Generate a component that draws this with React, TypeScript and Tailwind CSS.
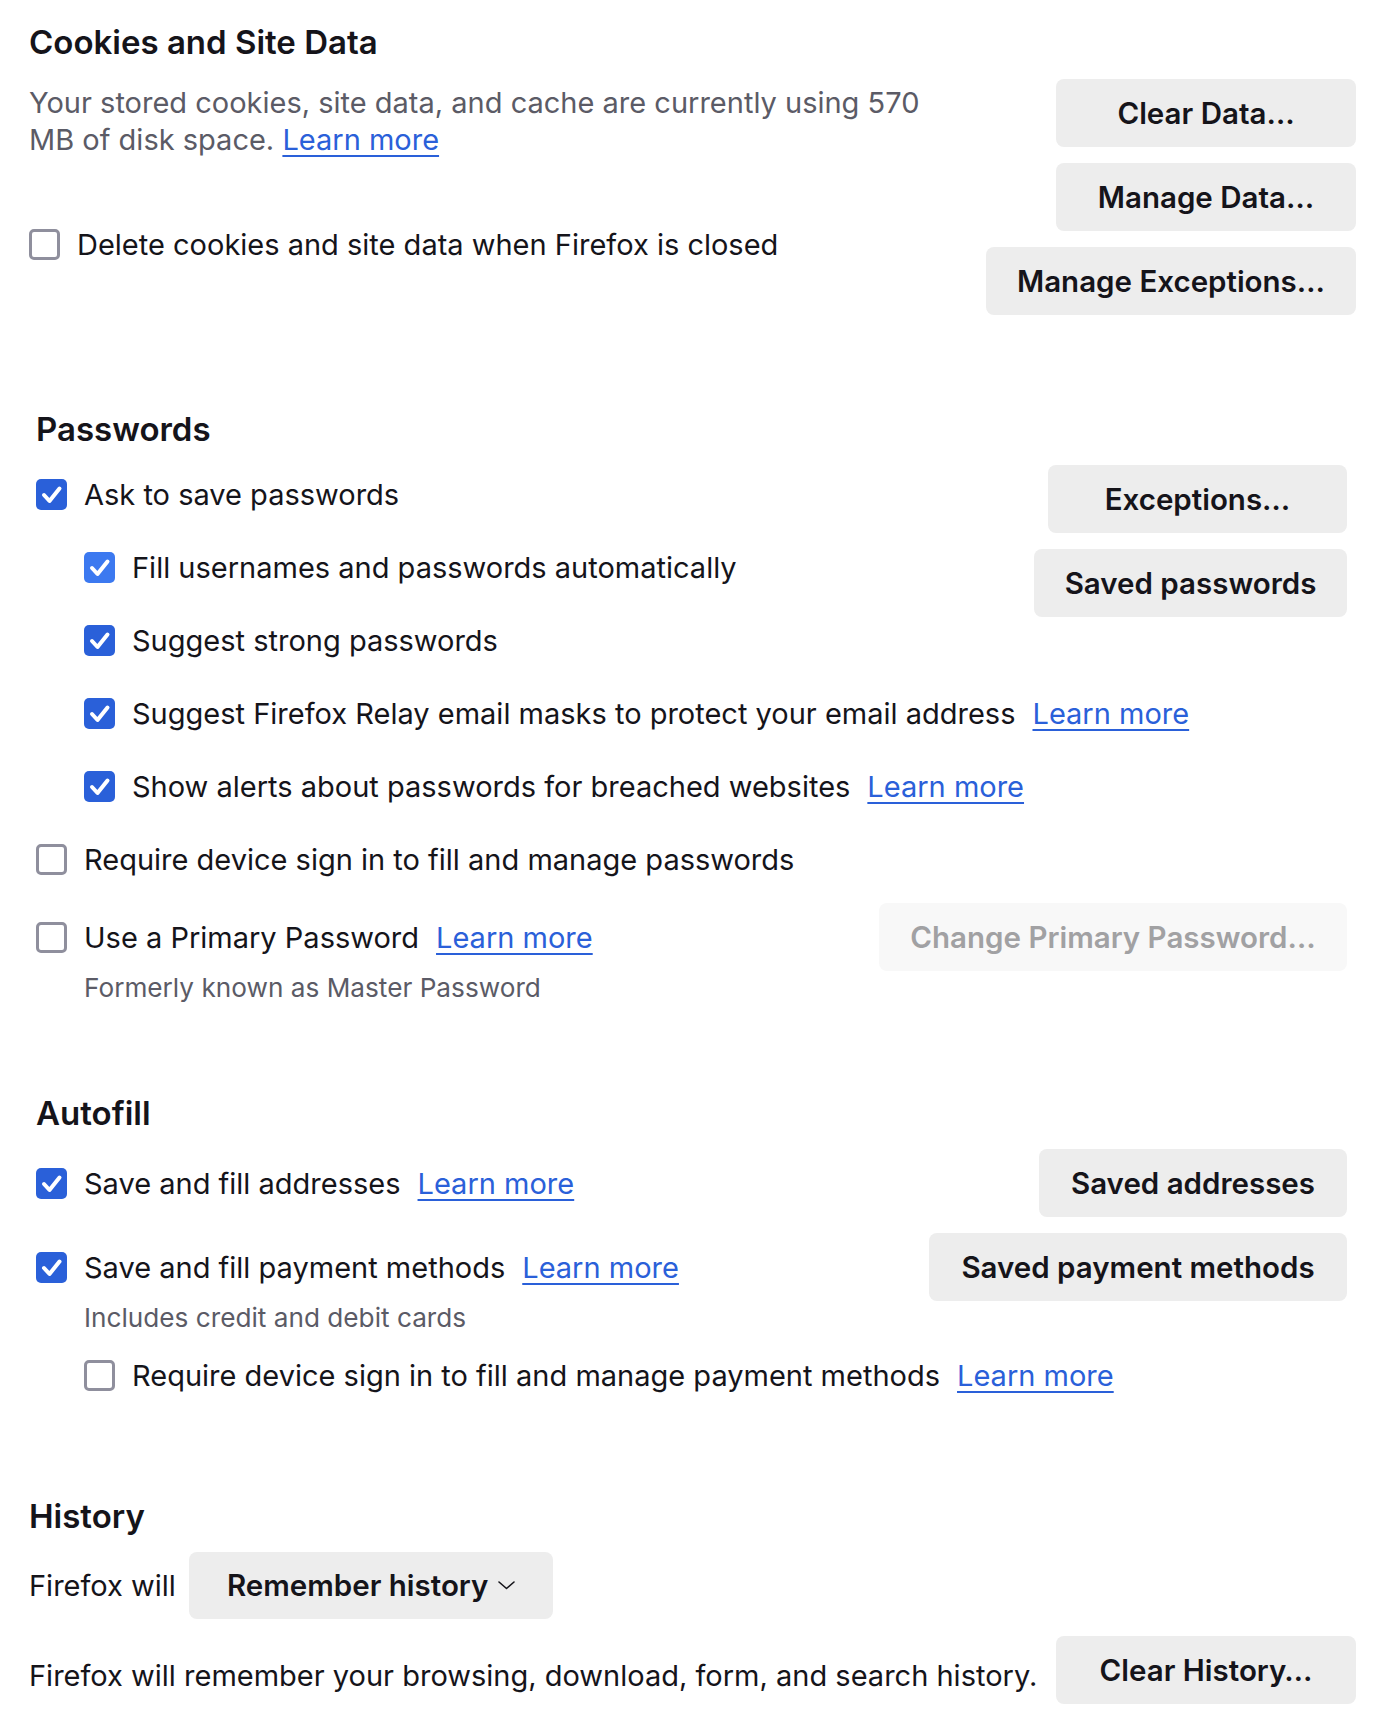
import React from "react";

const BODY = "text-[29px] leading-[37px]";

function Check({ checked, light }: { checked?: boolean; light?: boolean }) {
  if (checked) {
    return (
      <span
        className={
          light
            ? "flex h-[31px] w-[31px] shrink-0 items-center justify-center rounded-[5px] bg-[#3c79f0]"
            : "flex h-[31px] w-[31px] shrink-0 items-center justify-center rounded-[5px] bg-[#2a60d9]"
        }
      >
        <svg width="31" height="31" viewBox="0 0 31 31" fill="none">
          <path d="M8 16 L13.5 22 L23.5 9.5" stroke="white" strokeWidth="4" strokeLinecap="round" strokeLinejoin="round" />
        </svg>
      </span>
    );
  }
  return <span className="h-[31px] w-[31px] shrink-0 rounded-[5px] border-[3px] border-[#8f8f9d] bg-white" />;
}

function Link({ children, className = "" }: { children: React.ReactNode; className?: string }) {
  return (
    <a className={"text-[#2a60d9] underline decoration-[2px] underline-offset-[5px] " + className}>{children}</a>
  );
}

function Row({
  checked,
  light,
  children,
  className = "",
}: {
  checked?: boolean;
  light?: boolean;
  children: React.ReactNode;
  className?: string;
}) {
  return (
    <label className={"flex items-center gap-[17px] whitespace-nowrap " + BODY + " " + className}>
      <Check checked={checked} light={light} />
      <span className="flex items-center">{children}</span>
    </label>
  );
}

function Btn({
  children,
  className = "",
  disabled,
}: {
  children: React.ReactNode;
  className?: string;
  disabled?: boolean;
}) {
  return (
    <button
      className={
        (disabled ? "bg-[#f8f8f8] text-[#a1a1a3] " : "bg-[#ededed] text-[#15141a] ") +
        "flex h-[68px] shrink-0 items-center justify-center whitespace-nowrap rounded-[8px] text-[29.5px] font-semibold leading-[37px] " +
        className
      }
    >
      {children}
    </button>
  );
}

function H2({ children }: { children: React.ReactNode }) {
  return <h2 className="text-[33px] font-semibold leading-[40px] text-[#15141a]">{children}</h2>;
}

export default function App() {
  return (
    <div className="min-h-[1728px] w-[1392px] overflow-hidden bg-white font-['Inter',sans-serif] text-[#15141a] antialiased">
      {/* Cookies and Site Data */}
      <section className="pl-[29px] pr-[36px] pt-[22px]">
        <H2>Cookies and Site Data</H2>
        <div className="mt-[17px] flex items-start justify-between">
          <div className="min-w-0 flex-1">
            <p className={"mt-[5px] whitespace-nowrap text-[#5b5b66] " + BODY}>
              Your stored cookies, site data, and cache are currently using 570
              <br />
              MB of disk space. <Link>Learn more</Link>
            </p>
            <Row className="mt-[68px]">Delete cookies and site data when Firefox is closed</Row>
          </div>
          <div className="flex flex-col items-end gap-[16px]">
            <Btn className="w-[300px]">Clear Data…</Btn>
            <Btn className="w-[300px]">Manage Data…</Btn>
            <Btn className="w-[370px]">Manage Exceptions…</Btn>
          </div>
        </div>
      </section>

      {/* Passwords */}
      <section className="mt-[94px] pl-[36px] pr-[45px]">
        <H2>Passwords</H2>
        <div className="mt-[16px] flex items-start justify-between">
          <div className="mt-[11px] flex min-w-0 flex-1 flex-col gap-[36px]">
            <Row checked>Ask to save passwords</Row>
            <Row checked light className="ml-[48px]">
              Fill usernames and passwords automatically
            </Row>
            <Row checked className="ml-[48px]">
              Suggest strong passwords
            </Row>
            <Row checked className="ml-[48px]">
              Suggest Firefox Relay email masks to protect your email address
              <Link className="ml-[17px]">Learn more</Link>
            </Row>
            <Row checked className="ml-[48px]">
              Show alerts about passwords for breached websites
              <Link className="ml-[17px]">Learn more</Link>
            </Row>
            <Row>Require device sign in to fill and manage passwords</Row>
          </div>
          <div className="flex flex-col items-end gap-[16px]">
            <Btn className="w-[299px]">Exceptions…</Btn>
            <Btn className="w-[313px]">Saved passwords</Btn>
          </div>
        </div>
        <div className="mt-[25px] flex h-[68px] items-center justify-between">
          <Row>
            Use a Primary Password
            <Link className="ml-[17px]">Learn more</Link>
          </Row>
          <Btn disabled className="w-[468px]">
            Change Primary Password…
          </Btn>
        </div>
        <p className="pl-[48px] text-[26.2px] leading-[33px] text-[#5b5b66]">Formerly known as Master Password</p>
      </section>

      {/* Autofill */}
      <section className="mt-[89px] pl-[36px] pr-[45px]">
        <H2>Autofill</H2>
        <div className="mt-[16px] flex h-[68px] items-center justify-between">
          <Row checked>
            Save and fill addresses
            <Link className="ml-[17px]">Learn more</Link>
          </Row>
          <Btn className="w-[308px]">Saved addresses</Btn>
        </div>
        <div className="mt-[16px] flex h-[68px] items-center justify-between">
          <Row checked>
            Save and fill payment methods
            <Link className="ml-[17px]">Learn more</Link>
          </Row>
          <Btn className="w-[418px]">Saved payment methods</Btn>
        </div>
        <p className="pl-[48px] text-[26.2px] leading-[33px] text-[#5b5b66]">Includes credit and debit cards</p>
        <Row className="ml-[48px] mt-[23px]">
          Require device sign in to fill and manage payment methods
          <Link className="ml-[17px]">Learn more</Link>
        </Row>
      </section>

      {/* History */}
      <section className="mt-[102px] pl-[29px] pr-[36px] pb-[25px]">
        <H2>History</H2>
        <div className={"mt-[16px] flex items-center gap-[13px] " + BODY}>
          <span>Firefox will</span>
          <button className="flex h-[67px] w-[364px] items-center rounded-[8px] bg-[#ededed] pl-[38px] text-[29.5px] font-semibold">
            Remember history
            <svg className="ml-[10px]" width="17" height="9" viewBox="0 0 17 9" fill="none">
              <path d="M1 1 L8.5 7.5 L16 1" stroke="#15141a" strokeWidth="1.6" strokeLinecap="round" strokeLinejoin="round" />
            </svg>
          </button>
        </div>
        <div className="mt-[17px] flex items-center justify-between">
          <span className={"mt-[10px] whitespace-nowrap " + BODY}>
            Firefox will remember your browsing, download, form, and search history.
          </span>
          <Btn className="w-[300px]">Clear History…</Btn>
        </div>
      </section>
    </div>
  );
}
